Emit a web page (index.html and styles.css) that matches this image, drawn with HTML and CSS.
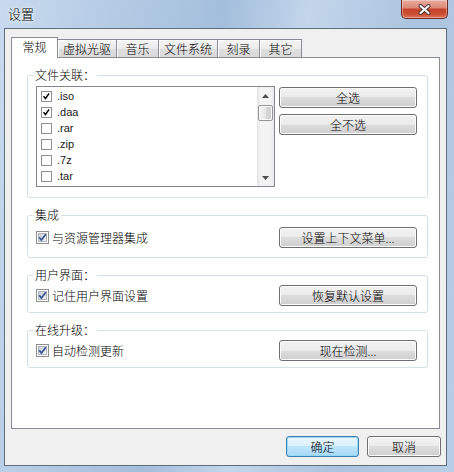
FILE: index.html
```html
<html>

<head>
	<link rel="stylesheet" href="styles.css">
</head>

<body>
	<div class="window">
		<div class="titlebar">
			<span class="title">设置</span>
			<div class="close-btn">
				<svg width="13" height="11" viewBox="0 0 13 11">
					<path d="M2.5 2 L10.5 9 M10.5 2 L2.5 9" stroke="#45302c" stroke-width="4" stroke-linecap="round" fill="none" />
					<path d="M2.5 2 L10.5 9 M10.5 2 L2.5 9" stroke="#ffffff" stroke-width="2.2" stroke-linecap="round" fill="none" />
				</svg>
			</div>
		</div>

		<div class="client">
			<div class="tabs">
				<div class="tab active">常规</div>
				<div class="tab">虚拟光驱</div>
				<div class="tab">音乐</div>
				<div class="tab">文件系统</div>
				<div class="tab">刻录</div>
				<div class="tab">其它</div>
			</div>

			<div class="panel">
				<fieldset class="group group-list">
					<legend>文件关联：</legend>
					<div class="assoc">
						<div class="listbox">
							<div class="list-items">
								<div class="item">
									<span class="lcheck"><svg width="9" height="9" viewBox="0 0 9 9"><path d="M1.5 4.2 L3.5 6.5 L7 1.5" stroke="#000" stroke-width="1.4" fill="none" /></svg></span>.iso
								</div>
								<div class="item">
									<span class="lcheck"><svg width="9" height="9" viewBox="0 0 9 9"><path d="M1.5 4.2 L3.5 6.5 L7 1.5" stroke="#000" stroke-width="1.4" fill="none" /></svg></span>.daa
								</div>
								<div class="item"><span class="lcheck"></span>.rar</div>
								<div class="item"><span class="lcheck"></span>.zip</div>
								<div class="item"><span class="lcheck"></span>.7z</div>
								<div class="item"><span class="lcheck"></span>.tar</div>
							</div>
							<div class="scrollbar">
								<div class="arrow"><svg width="7" height="4" viewBox="0 0 7 4"><polygon points="0,4 3.5,0 7,4" fill="#4f4f4f" /></svg></div>
								<div class="thumb"></div>
								<div class="track"></div>
								<div class="arrow"><svg width="7" height="4" viewBox="0 0 7 4"><polygon points="0,0 7,0 3.5,4" fill="#4f4f4f" /></svg></div>
							</div>
						</div>
						<div class="side-buttons">
							<button>全选</button>
							<button>全不选</button>
						</div>
					</div>
				</fieldset>

				<fieldset class="group group-tall">
					<legend>集成</legend>
					<div class="option-row">
						<label class="option">
							<svg width="13" height="13" viewBox="0 0 13 13">
								<defs>
									<linearGradient id="cb1" x1="0" y1="0" x2="1" y2="1">
										<stop offset="0" stop-color="#c9cdd3" />
										<stop offset="1" stop-color="#f7f7f7" />
									</linearGradient>
								</defs>
								<rect x="0.5" y="0.5" width="12" height="12" fill="#ffffff" stroke="#8e8f8f" />
								<rect x="2.5" y="2.5" width="8" height="8" fill="url(#cb1)" stroke="#b0b6bd" />
								<path d="M3.2 6.3 L5.4 9 L9.8 3.2" stroke="#3c5597" stroke-width="1.8" fill="none" />
							</svg>
							与资源管理器集成
						</label>
						<button class="wide">设置上下文菜单...</button>
					</div>
				</fieldset>

				<fieldset class="group">
					<legend>用户界面：</legend>
					<div class="option-row">
						<label class="option">
							<svg width="13" height="13" viewBox="0 0 13 13">
								<defs>
									<linearGradient id="cb2" x1="0" y1="0" x2="1" y2="1">
										<stop offset="0" stop-color="#c9cdd3" />
										<stop offset="1" stop-color="#f7f7f7" />
									</linearGradient>
								</defs>
								<rect x="0.5" y="0.5" width="12" height="12" fill="#ffffff" stroke="#8e8f8f" />
								<rect x="2.5" y="2.5" width="8" height="8" fill="url(#cb2)" stroke="#b0b6bd" />
								<path d="M3.2 6.3 L5.4 9 L9.8 3.2" stroke="#3c5597" stroke-width="1.8" fill="none" />
							</svg>
							记住用户界面设置
						</label>
						<button class="wide">恢复默认设置</button>
					</div>
				</fieldset>

				<fieldset class="group">
					<legend>在线升级：</legend>
					<div class="option-row">
						<label class="option">
							<svg width="13" height="13" viewBox="0 0 13 13">
								<defs>
									<linearGradient id="cb3" x1="0" y1="0" x2="1" y2="1">
										<stop offset="0" stop-color="#c9cdd3" />
										<stop offset="1" stop-color="#f7f7f7" />
									</linearGradient>
								</defs>
								<rect x="0.5" y="0.5" width="12" height="12" fill="#ffffff" stroke="#8e8f8f" />
								<rect x="2.5" y="2.5" width="8" height="8" fill="url(#cb3)" stroke="#b0b6bd" />
								<path d="M3.2 6.3 L5.4 9 L9.8 3.2" stroke="#3c5597" stroke-width="1.8" fill="none" />
							</svg>
							自动检测更新
						</label>
						<button class="wide">现在检测...</button>
					</div>
				</fieldset>
			</div>

			<div class="dialog-buttons">
				<button class="default ok">确定</button>
				<button class="cancel">取消</button>
			</div>
		</div>
	</div>
</body>

</html>
```

FILE: styles.css
```css
/* Windows 7 style settings dialog */
:root {
	--tab-border: #898c95;
	--group-border: #d5dfe5;
	--button-border: #707070;
}

body {
	margin: 0;
	font-family: "Noto Sans CJK SC", sans-serif;
	font-size: 12px;
	font-weight: 300;
	color: #000;
}

.window {
	width: 454px;
	height: 472px;
	box-sizing: border-box;
	padding: 0 7px 6px 4px;
	display: flex;
	flex-direction: column;
	background: linear-gradient(100deg, #c8daee 0%, #b4cbe4 22%, #a3bedc 42%, #c3d6eb 58%, #abc4df 78%, #b8cee6 100%);
}

.titlebar {
	height: 28px;
	display: flex;
	justify-content: space-between;
	align-items: flex-start;
	margin-right: -1px;
}

.title {
	padding-left: 4px;
	line-height: 27px;
	font-size: 13px;
	text-shadow: 0 0 5px #ffffff, 0 0 3px #ffffff;
}

.close-btn {
	width: 47px;
	height: 19px;
	box-sizing: border-box;
	display: flex;
	align-items: center;
	justify-content: center;
	border: 1px solid #6d2a23;
	border-top: none;
	border-radius: 0 0 5px 5px;
	background: linear-gradient(#e9ab9e 0%, #dc8a78 42%, #c7442c 52%, #c94c31 75%, #df7458 100%);
	box-shadow: inset 0 0 0 1px rgba(255, 255, 255, 0.35);
}

.client {
	flex: 1;
	display: flex;
	flex-direction: column;
	padding: 8px 6px;
	background: #f0f0f0;
	border: 1px solid #5f6d7c;
}

/* tabs */
.tabs {
	display: flex;
	align-items: flex-end;
	height: 20px;
}

.tab {
	height: 17px;
	min-width: 31px;
	padding: 0 5px;
	margin-left: -1px;
	line-height: 17px;
	text-align: center;
	border: 1px solid var(--tab-border);
	border-bottom: none;
	background: linear-gradient(#f4f4f4 0%, #ececec 50%, #dfdfdf 50%, #dadada 100%);
	box-shadow: inset 1px 1px 0 #fdfdfd;
}

.tab.active {
	position: relative;
	z-index: 1;
	height: 20px;
	padding: 0 7px;
	margin-left: 0;
	margin-bottom: -1px;
	line-height: 18px;
	background: #ffffff;
	box-shadow: none;
}

.panel {
	height: 372px;
	box-sizing: border-box;
	border: 1px solid var(--tab-border);
	background: #ffffff;
}

/* group boxes */
.group {
	margin: 10px 11px 0 15px;
	padding: 3px 10px 6px 8px;
	border: 1px solid var(--group-border);
	border-radius: 3px;
	min-width: 0;
}

.group legend {
	margin-left: -3px;
	padding: 0 2px;
	line-height: 14px;
}

.group-list {
	padding: 4px 10px 10px 8px;
}

.group-tall {
	padding: 5px 10px 9px 8px;
}

.assoc {
	display: flex;
	align-items: flex-start;
	gap: 4px;
}

.listbox {
	width: 239px;
	height: 101px;
	box-sizing: border-box;
	display: flex;
	border: 1px solid #828790;
	background: #ffffff;
}

.list-items {
	flex: 1;
	padding: 1px 0 0 4px;
	font-family: "Liberation Sans", sans-serif;
	font-size: 11px;
	font-weight: 400;
	color: #1a1a1a;
}

.item {
	height: 16px;
	display: flex;
	align-items: center;
	gap: 5px;
}

.lcheck {
	width: 11px;
	height: 11px;
	box-sizing: border-box;
	display: flex;
	border: 1px solid #8f8f8f;
	background: #ffffff;
}

.scrollbar {
	width: 17px;
	display: flex;
	flex-direction: column;
	background: linear-gradient(to right, #e4e4e4, #f3f3f3 20%, #f3f3f3 80%, #eaeaea);
}

.arrow {
	height: 17px;
	display: flex;
	align-items: center;
	justify-content: center;
}

.thumb {
	height: 16px;
	margin: 1px 1px 0;
	box-sizing: border-box;
	border: 1px solid #959595;
	border-radius: 2px;
	background: linear-gradient(to right, #f3f3f3, #e7e7e7 50%, #d8d8d8 50%, #d0d0d0);
	box-shadow: inset 0 0 0 1px #fafafa;
}

.track {
	flex: 1;
}

.side-buttons {
	width: 138px;
	margin-top: 1px;
	display: flex;
	flex-direction: column;
	gap: 6px;
}

.option-row {
	display: flex;
	align-items: center;
	justify-content: space-between;
}

.option {
	display: flex;
	align-items: center;
	gap: 3px;
}

/* buttons */
button {
	height: 21px;
	padding: 0;
	font: inherit;
	color: #000;
	border: 1px solid var(--button-border);
	border-radius: 3px;
	background: linear-gradient(#f2f2f2 0%, #ebebeb 50%, #dddddd 50%, #cfcfcf 100%);
	box-shadow: inset 0 0 0 1px #fcfcfc;
}

button.wide {
	width: 138px;
}

.dialog-buttons {
	margin: 7px -1px 0 0;
	display: flex;
	justify-content: flex-end;
	gap: 8px;
}

.ok {
	width: 73px;
}

.cancel {
	width: 74px;
}

button.default {
	border-color: #3c7fb1;
	background: linear-gradient(#eaf6fd 0%, #d9f0fc 50%, #bee6fd 50%, #a7d9f5 100%);
	box-shadow: inset 0 0 0 1px #9ad7f7;
}
```
